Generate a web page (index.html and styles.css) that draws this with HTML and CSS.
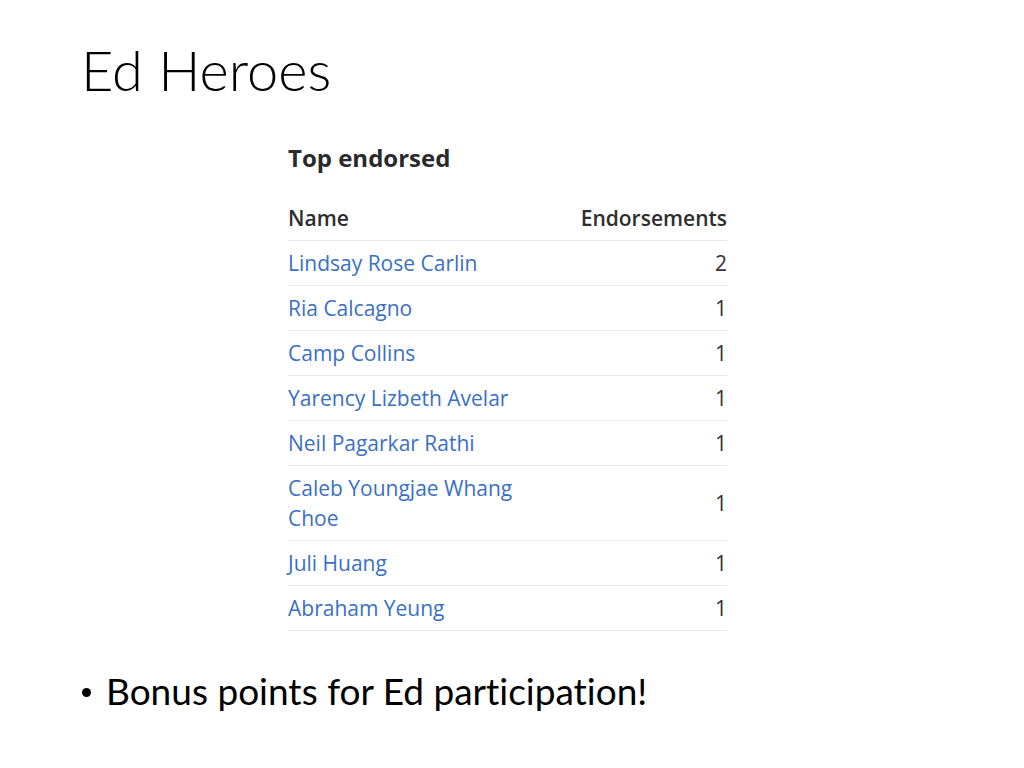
FILE: index.html
```html
<!DOCTYPE html>
<html lang="en">
<head>
<meta charset="utf-8">
<title>Ed Heroes</title>
<link rel="stylesheet" href="styles.css">
</head>
<body>
<div class="slide">
  <h1 class="title">Ed Heroes</h1>
  <section class="card">
    <h2 class="card-title">Top endorsed</h2>
    <table class="board">
      <colgroup><col class="col-name"><col class="col-count"></colgroup>
      <thead>
        <tr><th class="th-name">Name</th><th class="th-count">Endorsements</th></tr>
      </thead>
      <tbody>
        <tr><td><a class="person">Lindsay Rose Carlin</a></td><td class="count">2</td></tr>
        <tr><td><a class="person">Ria Calcagno</a></td><td class="count">1</td></tr>
        <tr><td><a class="person">Camp Collins</a></td><td class="count">1</td></tr>
        <tr><td><a class="person">Yarency Lizbeth Avelar</a></td><td class="count">1</td></tr>
        <tr><td><a class="person">Neil Pagarkar Rathi</a></td><td class="count">1</td></tr>
        <tr><td><a class="person">Caleb Youngjae Whang Choe</a></td><td class="count">1</td></tr>
        <tr><td><a class="person">Juli Huang</a></td><td class="count">1</td></tr>
        <tr><td><a class="person">Abraham Yeung</a></td><td class="count">1</td></tr>
      </tbody>
    </table>
  </section>
  <ul class="bullets">
    <li>Bonus points for Ed participation!</li>
  </ul>
</div>
</body>
</html>
```

FILE: styles.css
```css
html, body {
  margin: 0;
  padding: 0;
  background: #ffffff;
}

.slide {
  width: 1024px;
  height: 768px;
  overflow: hidden;
  background: #ffffff;
  display: flex;
  flex-direction: column;
}

.title {
  margin: 0;
  padding: 35px 0 0 81px;
  font-family: Lato, "Open Sans", sans-serif;
  font-weight: 300;
  font-size: 56px;
  line-height: 70px;
  color: #000000;
}

.card {
  margin: 38px 0 0 288px;
  width: 439px;
}

.card-title {
  margin: 0 0 31px 0;
  font-family: "Open Sans", sans-serif;
  font-weight: 700;
  font-size: 24px;
  line-height: 29px;
  color: #2a2a2a;
}

.board {
  width: 100%;
  border-collapse: collapse;
  table-layout: fixed;
  font-family: "Open Sans", sans-serif;
  font-size: 21px;
  line-height: 30px;
  color: #333333;
}

.col-name { width: 250px; }
.col-count { width: auto; }

.board th {
  font-weight: 600;
  color: #2e2e2e;
  padding: 0 0 7px 0;
  border-bottom: 1px solid #e8e8e8;
}

.th-name { text-align: left; }
.th-count { text-align: right; }

.board td {
  padding: 7px 0;
  border-bottom: 1px solid #e8e8e8;
  vertical-align: middle;
}

.person {
  color: #3a70c4;
  text-decoration: none;
}

.count {
  text-align: right;
  color: #333333;
}

.bullets {
  margin: auto 0 55px 0;
  padding: 0 0 0 106px;
  list-style: none;
  font-family: Lato, "Open Sans", sans-serif;
  font-variant-ligatures: none;
  font-size: 37px;
  line-height: 44px;
  color: #000000;
}

.bullets li {
  position: relative;
}

.bullets li::before {
  content: "";
  position: absolute;
  left: -24px;
  top: 19px;
  width: 9px;
  height: 9px;
  border-radius: 50%;
  background: #000000;
}
```
